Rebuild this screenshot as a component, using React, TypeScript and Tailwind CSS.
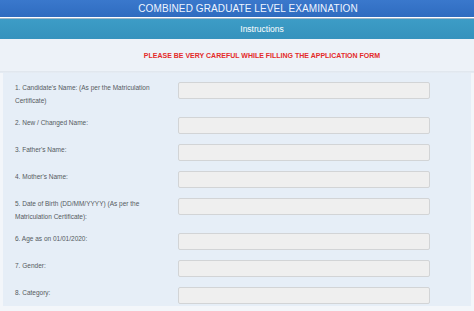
const fields: string[] = [
  "1. Candidate's Name: (As per the Matriculation Certificate)",
  "2. New / Changed Name:",
  "3. Father's Name:",
  "4. Mother's Name:",
  "5. Date of Birth (DD/MM/YYYY) (As per the Matriculation Certificate):",
  "6. Age as on 01/01/2020:",
  "7. Gender:",
  "8. Category:",
];

export default function App() {
  return (
    <div className="w-[474px] h-[311px] overflow-hidden bg-[#f3f6fa] font-['Liberation_Sans',Arial,sans-serif]">
      {/* Title bar */}
      <div className="h-[17px] bg-gradient-to-b from-[#3a78cc] to-[#2f6cc0] flex items-center justify-center pl-[22px]">
        <span className="text-[10px] leading-none text-[#eef4ff] tracking-[0.01em]">COMBINED GRADUATE LEVEL EXAMINATION</span>
      </div>
      <div className="h-[1px] bg-white" />
      <div className="h-[1px] bg-[#9fb6c8]" />
      {/* Instructions bar */}
      <div className="h-[20px] bg-gradient-to-b from-[#3d9cc6] to-[#3592bd] flex items-center justify-center pl-[50px]">
        <span className="text-[8.5px] leading-none text-white">Instructions</span>
      </div>
      {/* Warning */}
      <div className="h-[32px] bg-[#edf2f8] flex items-center justify-center pl-[50px]">
        <span className="text-[7px] font-bold text-[#e42a2a] leading-none">PLEASE BE VERY CAREFUL WHILE FILLING THE APPLICATION FORM</span>
      </div>
      <div className="h-[2px] bg-gradient-to-b from-[#dfe5ec] to-[#e6edf5]" />
      {/* Form panel */}
      <div className="mx-[3px] bg-[#e6eef7] pt-[9px] pb-[2px] pl-[12px] flex flex-col gap-[10px]">
        {fields.map((f) => (
          <div key={f} className="flex items-start">
            <div className="w-[163px] pr-[13px] text-[6.5px] leading-[12.5px] text-[#555a60]">{f}</div>
            <div className="w-[252px] h-[17px] bg-[#efefef] border border-[#d2d4d6] rounded-[2px]" />
          </div>
        ))}
      </div>
    </div>
  );
}
